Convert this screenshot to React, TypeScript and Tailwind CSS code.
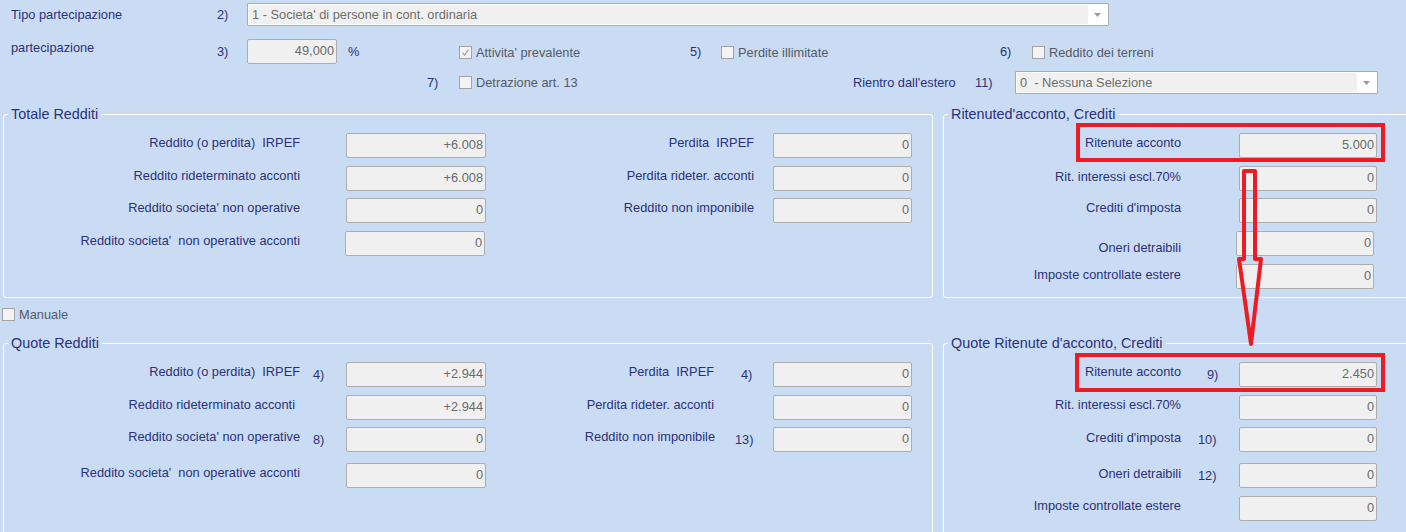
import React from 'react';

const LABEL = 'text-[#2a3178]';
const GREY = 'text-[#555a66]';

function Check({ checked }: { checked?: boolean }) {
  return (
    <span className="w-[13px] h-[13px] shrink-0 border border-[#a3a3a3] bg-[#f3f3f3] flex items-center justify-center">
      {checked && (
        <svg viewBox="0 0 9 9" className="w-[9px] h-[9px]">
          <path d="M1.5 4.8 L3.6 7.2 L7.6 1.6" stroke="#a9a9a9" strokeWidth="1.4" fill="none" />
        </svg>
      )}
    </span>
  );
}

function CheckLabel({ text, checked, className }: { text: string; checked?: boolean; className: string }) {
  return (
    <div className={`flex items-center gap-[4px] shrink-0 ${className}`}>
      <Check checked={checked} />
      <span className={`whitespace-pre ${GREY}`}>{text}</span>
    </div>
  );
}

function Combo({ text, className }: { text: string; className: string }) {
  return (
    <div className={`h-[23px] shrink-0 flex border border-[#acacac] bg-white p-[1px] rounded-[1px] ${className}`}>
      <div className="flex-1 bg-[#f0f0f0] flex items-center pl-[3px] whitespace-pre text-[#6d6d6d]">{text}</div>
      <div className="w-[19px] flex items-center justify-center">
        <svg viewBox="0 0 7 4" className="w-[7px] h-[4px]">
          <path d="M0 0 H7 L3.5 4 Z" fill="#9c9c9c" />
        </svg>
      </div>
    </div>
  );
}

function Field({ value, className = 'w-[140px]' }: { value: string; className?: string }) {
  return (
    <div
      className={`h-[25px] shrink-0 border border-[#adadad] bg-[#f0f0f0] rounded-[2px] text-right pr-[2px] pt-[3px] leading-[15px] text-[#6b6b6b] ${className}`}
    >
      {value}
    </div>
  );
}

type Cell = {
  label: string;
  labelW: string;
  shift?: string;
  num?: string;
  numW: string;
  numPl?: string;
  value: string;
  inputW?: string;
};

function Pair({ c }: { c: Cell }) {
  return (
    <>
      <span className={`shrink-0 text-right whitespace-pre ${LABEL} ${c.labelW} ${c.shift ?? '-mt-[6px]'}`}>{c.label}</span>
      <span className={`shrink-0 ${LABEL} ${c.numW} ${c.numPl ?? ''}`}>{c.num}</span>
      <Field value={c.value} className={c.inputW ?? 'w-[140px]'} />
    </>
  );
}

function Row({ cells, className }: { cells: Cell[]; className: string }) {
  return (
    <div className={`flex items-center h-[25px] ${className}`}>
      {cells.map((c, i) => (
        <Pair key={i} c={c} />
      ))}
    </div>
  );
}

function Group({ title, className, children }: { title: string; className: string; children: React.ReactNode }) {
  return (
    <div className={`flex-none ${className}`}>
      <fieldset className="w-full h-full min-w-0 border border-white rounded-[3px]">
        <legend className={`ml-[4px] px-[3px] text-[14.4px] leading-[16px] ${LABEL}`}>{title}</legend>
        <div className="flex flex-col">{children}</div>
      </fieldset>
    </div>
  );
}

const L = { labelW: 'w-[296px]', numW: 'w-[46px]', numPl: 'pl-[13px]' };
const R = { labelW: 'w-[268px]', numW: 'w-[19px]', inputW: 'w-[139px]' };
const RQ = { labelW: 'w-[228px]', numW: 'w-[59px]', inputW: 'w-[139px]' };
const K = { labelW: 'w-[237px]', numW: 'w-[58px]', inputW: 'w-[138px]' };

export default function App() {
  return (
    <div className="relative w-[1406px] h-[532px] overflow-hidden bg-[#cadcf4] font-['Liberation_Sans',Arial,sans-serif] text-[12.8px] leading-[15px]">
      {/* intestazione */}
      <div className="flex items-center h-[23px] mt-[3px]">
        <span className={`w-[217px] pl-[11px] shrink-0 ${LABEL}`}>Tipo partecipazione</span>
        <span className={`w-[30px] shrink-0 ${LABEL}`}>2)</span>
        <Combo text="1 - Societa' di persone in cont. ordinaria" className="w-[862px]" />
      </div>
      <div className="flex items-center h-[25px] mt-[13px]">
        <span className={`w-[217px] pl-[11px] shrink-0 -mt-[8px] ${LABEL}`}>partecipazione</span>
        <span className={`w-[30px] shrink-0 ${LABEL}`}>3)</span>
        <Field value="49,000" className="w-[90px]" />
        <span className={`w-[122px] pl-[11px] shrink-0 ${LABEL}`}>%</span>
        <CheckLabel text="Attivita' prevalente" checked className="w-[231px] mt-[2px]" />
        <span className={`w-[31px] shrink-0 ${LABEL}`}>5)</span>
        <CheckLabel text="Perdite illimitate" className="w-[279px] mt-[2px]" />
        <span className={`w-[32px] shrink-0 ${LABEL}`}>6)</span>
        <CheckLabel text="Reddito dei terreni" className="mt-[2px]" />
      </div>
      <div className="flex items-center h-[23px] mt-[7px]">
        <span className="w-[427px] shrink-0"></span>
        <span className={`w-[32px] shrink-0 ${LABEL}`}>7)</span>
        <CheckLabel text="Detrazione art. 13" className="w-[394px]" />
        <span className={`w-[122px] shrink-0 ${LABEL}`}>Rientro dall'estero</span>
        <span className={`w-[40px] shrink-0 ${LABEL}`}>11)</span>
        <Combo text="0  - Nessuna Selezione" className="w-[363px]" />
      </div>

      {/* totali */}
      <div className="flex w-[1440px] mt-[12px]">
        <Group title="Totale Redditi" className="w-[930px] h-[192px] ml-[3px]">
          <Row
            className="mt-[11px]"
            cells={[
              { ...L, label: 'Reddito (o perdita)  IRPEF', value: '+6.008' },
              { ...R, label: 'Perdita  IRPEF', value: '0' },
            ]}
          />
          <Row
            className="mt-[8px]"
            cells={[
              { ...L, label: 'Reddito rideterminato acconti', shift: '-mt-[7px]', value: '+6.008' },
              { ...R, label: 'Perdita rideter. acconti', shift: '-mt-[7px]', value: '0' },
            ]}
          />
          <Row
            className="mt-[7px]"
            cells={[
              { ...L, label: "Reddito societa' non operative", value: '0' },
              { ...R, label: 'Reddito non imponibile', value: '0' },
            ]}
          />
          <Row
            className="mt-[8px]"
            cells={[{ ...L, label: "Reddito societa'  non operative acconti", shift: '-mt-[7px]', numW: 'w-[45px]', value: '0' }]}
          />
        </Group>
        <Group title="Ritenuted'acconto, Crediti" className="w-[480px] h-[192px] ml-[10px]">
          <Row className="mt-[11px]" cells={[{ ...K, label: 'Ritenute acconto', value: '5.000' }]} />
          <Row className="mt-[8px]" cells={[{ ...K, label: 'Rit. interessi escl.70%', shift: '-mt-[5px]', value: '0' }]} />
          <Row className="mt-[7px]" cells={[{ ...K, label: "Crediti d'imposta", value: '0' }]} />
          <Row
            className="mt-[8px]"
            cells={[{ ...K, label: 'Oneri detraibili', shift: 'mt-[7px]', numW: 'w-[55px]', value: '0' }]}
          />
          <Row
            className="mt-[8px]"
            cells={[{ ...K, label: 'Imposte controllate estere', shift: '-mt-[4px]', numW: 'w-[55px]', value: '0' }]}
          />
        </Group>
      </div>

      <div className="flex items-center h-[14px] mt-[9px] ml-[2px]">
        <CheckLabel text="Manuale" className="" />
      </div>

      {/* quote */}
      <div className="flex w-[1440px] mt-[14px]">
        <Group title="Quote Redditi" className="w-[930px] h-[220px] ml-[3px]">
          <Row
            className="mt-[11px]"
            cells={[
              { ...L, label: 'Reddito (o perdita)  IRPEF', num: '4)', value: '+2.944' },
              { ...RQ, label: 'Perdita  IRPEF', num: '4)', numPl: 'pl-[27px]', value: '0' },
            ]}
          />
          <Row
            className="mt-[8px]"
            cells={[
              { ...L, label: 'Reddito rideterminato acconti', labelW: 'w-[291px]', numW: 'w-[51px]', value: '+2.944' },
              { ...RQ, label: 'Perdita rideter. acconti', value: '0' },
            ]}
          />
          <Row
            className="mt-[7px]"
            cells={[
              { ...L, label: "Reddito societa' non operative", num: '8)', value: '0' },
              { ...RQ, label: 'Reddito non imponibile', labelW: 'w-[229px]', numW: 'w-[58px]', num: '13)', numPl: 'pl-[20px]', value: '0' },
            ]}
          />
          <Row
            className="mt-[11px]"
            cells={[{ ...L, label: "Reddito societa'  non operative acconti", shift: '-mt-[6px]', value: '0' }]}
          />
        </Group>
        <Group title="Quote Ritenute d'acconto, Crediti" className="w-[480px] h-[220px] ml-[10px]">
          <Row className="mt-[11px]" cells={[{ ...K, label: 'Ritenute acconto', num: '9)', numPl: 'pl-[26px]', value: '2.450' }]} />
          <Row className="mt-[8px]" cells={[{ ...K, label: 'Rit. interessi escl.70%', shift: '-mt-[7px]', value: '0' }]} />
          <Row
            className="mt-[7px]"
            cells={[{ ...K, label: "Crediti d'imposta", shift: '-mt-[5px]', num: '10)', numPl: 'pl-[17px]', value: '0' }]}
          />
          <Row
            className="mt-[11px]"
            cells={[{ ...K, label: 'Oneri detraibili', shift: '-mt-[4px]', num: '12)', numPl: 'pl-[17px]', value: '0' }]}
          />
          <Row
            className="mt-[8px]"
            cells={[{ ...K, label: 'Imposte controllate estere', shift: '-mt-[7px]', value: '0' }]}
          />
        </Group>
      </div>

      {/* annotazioni */}
      <div className="absolute left-[1076px] top-[123px] w-[309px] h-[39px] border-4 border-[#ed1c24]" />
      <div className="absolute left-[1075px] top-[353px] w-[310px] h-[39px] border-4 border-[#ed1c24]" />
      <svg className="absolute left-[1230px] top-[160px] w-[40px] h-[195px]" viewBox="0 0 40 195">
        <path
          d="M14 11 L25 11 L25 99 L31 99 L21 184 L9 99 L14 99 Z"
          stroke="#ed1c24"
          strokeWidth="4"
          strokeLinejoin="round"
          fill="none"
        />
      </svg>
    </div>
  );
}
